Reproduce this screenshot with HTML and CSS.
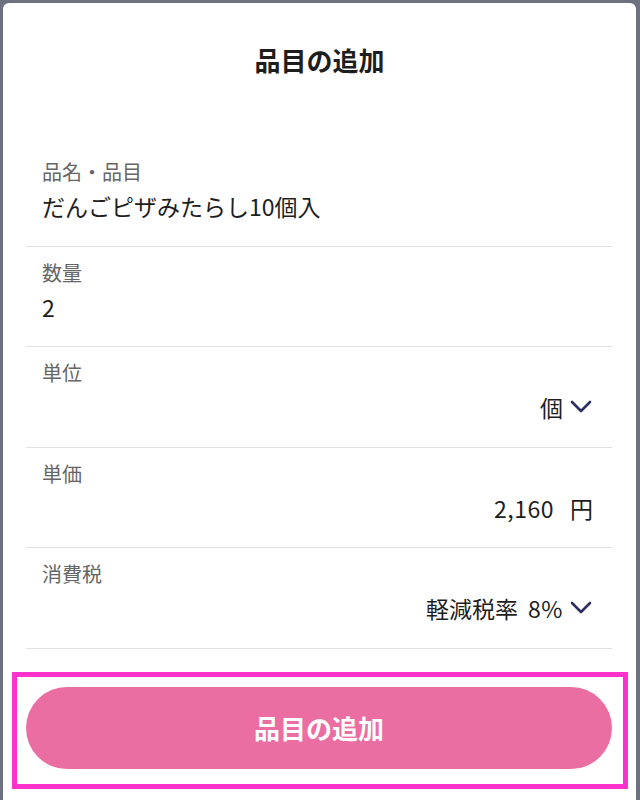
FILE: index.html
```html
<!DOCTYPE html>
<html lang="ja">
<head>
<meta charset="utf-8">
<title>品目の追加</title>
<link rel="stylesheet" href="styles.css">
</head>
<body>
<div class="modal">
  <h1 class="title">品目の追加</h1>
  <div class="list">
    <div class="row">
      <div class="label">品名・品目</div>
      <div class="value">だんごピザみたらし10個入</div>
    </div>
    <div class="row">
      <div class="label">数量</div>
      <div class="value">2</div>
    </div>
    <div class="row">
      <div class="label">単位</div>
      <div class="value right">個<svg class="chev" viewBox="0 0 24 14" width="24" height="14"><path d="M3 2 L12 11 L21 2" fill="none" stroke="#2b2f63" stroke-width="2.6" stroke-linecap="round" stroke-linejoin="round"/></svg></div>
    </div>
    <div class="row">
      <div class="label">単価</div>
      <div class="value right"><span class="num">2,160</span><span class="yen">円</span></div>
    </div>
    <div class="row">
      <div class="label">消費税</div>
      <div class="value right">軽減税率<span class="rate">8%</span><svg class="chev" viewBox="0 0 24 14" width="24" height="14"><path d="M3 2 L12 11 L21 2" fill="none" stroke="#2b2f63" stroke-width="2.6" stroke-linecap="round" stroke-linejoin="round"/></svg></div>
    </div>
  </div>
  <div class="highlight">
    <button class="add-btn" type="button">品目の追加</button>
  </div>
</div>
</body>
</html>
```
FILE: styles.css
```css
html, body {
  margin: 0;
  padding: 0;
}
body {
  background: #6d7180;
  font-family: "Noto Sans CJK JP", "Noto Sans", sans-serif;
  color: #222;
  height: 800px;
  overflow: hidden;
}
.modal {
  margin: 3px 4px 0 3px;
  background: #fff;
  border-radius: 6px 6px 0 0;
  height: 797px;
  overflow: hidden;
}
.title {
  margin: 0 0 29px;
  height: 114px;
  line-height: 114px;
  font-size: 26px;
  font-weight: 700;
  text-align: center;
  color: #1e1e1e;
}
.list {
  margin: 0 24px 0 23px;
}
.row {
  box-sizing: border-box;
  height: 100.5px;
  padding: 12px 19px 0 16px;
  border-bottom: 1px solid #e1e1e4;
}
.label {
  font-size: 20px;
  line-height: 28px;
  color: #666;
}
.value {
  font-size: 23px;
  line-height: 40px;
  color: #1e1e1e;
  display: flex;
  align-items: center;
}
.value.right {
  justify-content: flex-end;
}
.num {
  letter-spacing: 0.5px;
}
.rate {
  margin-left: 10px;
  letter-spacing: 0.5px;
}
.chev {
  margin-left: 6px;
  display: block;
}
.yen {
  margin-left: 16px;
}
.highlight {
  margin: 23px 8px 0 9px;
  border: 5px solid #ff33cc;
  padding: 10px 11px 15px 9px;
}
.add-btn {
  display: block;
  width: 100%;
  height: 82px;
  border: none;
  border-radius: 41px;
  background: #eb6ea3;
  color: #fff;
  font-family: "Noto Sans CJK JP", "Noto Sans", sans-serif;
  font-size: 26px;
  font-weight: 700;
  padding: 0;
}
```
